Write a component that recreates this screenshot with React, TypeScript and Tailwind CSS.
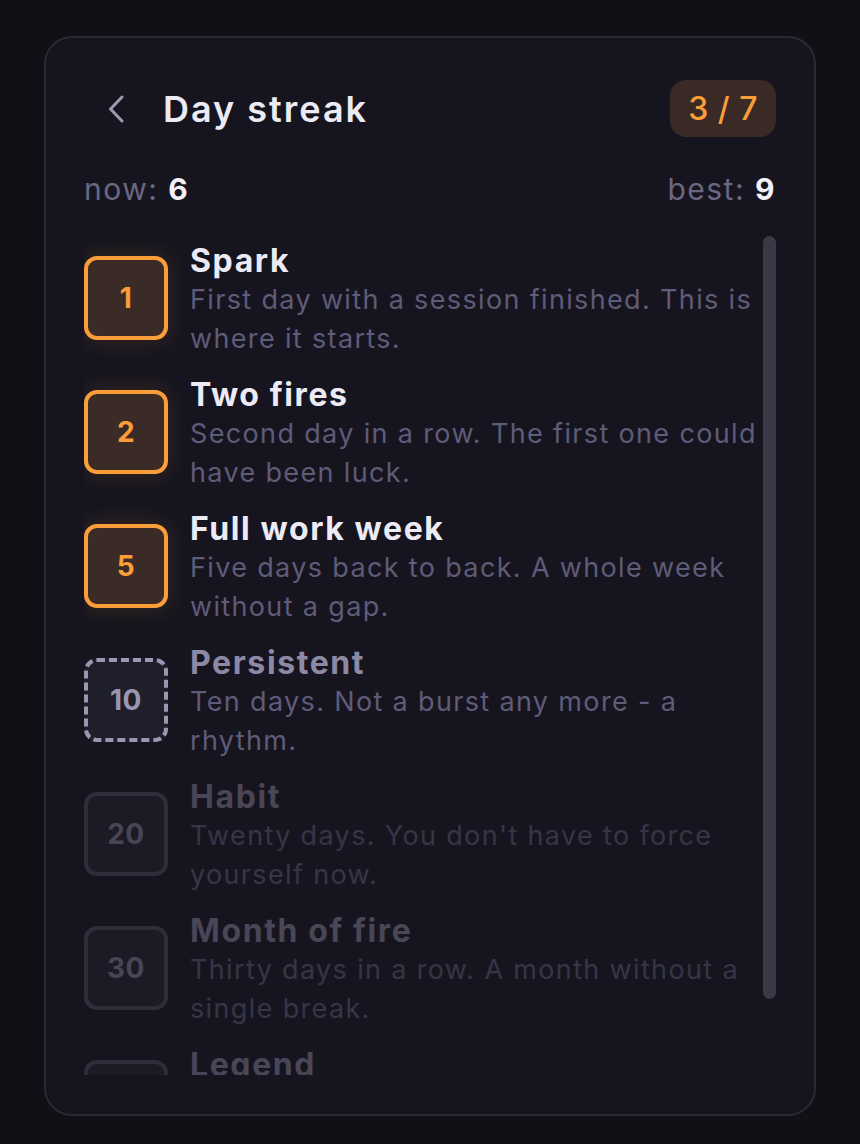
import { ReactNode } from 'react';

type Status = 'done' | 'next' | 'locked';

const milestones: { days: number; title: string; text: string; status: Status }[] = [
  { days: 1, title: 'Spark', text: 'First day with a session finished. This is where it starts.', status: 'done' },
  { days: 2, title: 'Two fires', text: 'Second day in a row. The first one could have been luck.', status: 'done' },
  { days: 5, title: 'Full work week', text: 'Five days back to back. A whole week without a gap.', status: 'done' },
  { days: 10, title: 'Persistent', text: 'Ten days. Not a burst any more - a rhythm.', status: 'next' },
  { days: 20, title: 'Habit', text: "Twenty days. You don't have to force yourself now.", status: 'locked' },
  { days: 30, title: 'Month of fire', text: 'Thirty days in a row. A month without a single break.', status: 'locked' },
  { days: 60, title: 'Legend', text: 'Sixty days. Two months without missing a single day.', status: 'locked' },
];

function DayBadge({ days, status }: { days: number; status: Status }) {
  const styles: Record<Status, string> = {
    done: 'border-[#fb9d38] bg-[#3a2b26] text-[#fb9d38] shadow-[0_0_22px_rgba(251,157,56,0.16)]',
    next: 'border-dashed border-[#9b97b3] bg-[#1f1e2b] text-[#9a96b0]',
    locked: 'border-[#2e2d39] bg-[#1b1a25] text-[#474556]',
  };
  return (
    <div
      className={`mt-[15px] w-[84px] h-[84px] shrink-0 rounded-[13px] border-4 flex items-center justify-center text-[28px] font-bold tracking-[0.5px] ${styles[status]}`}
    >
      {days}
    </div>
  );
}

function Stat({ label, value }: { label: string; value: ReactNode }) {
  return (
    <span className="text-[30px] leading-9 tracking-[1.5px] text-[#6a6781]">
      {label}: <span className="font-bold text-[#f2f1f8]">{value}</span>
    </span>
  );
}

export default function App() {
  const titleColor: Record<Status, string> = {
    done: 'text-[#ecebf5]',
    next: 'text-[#8d89a5]',
    locked: 'text-[#484657]',
  };
  const textColor: Record<Status, string> = {
    done: 'text-[#5f5b78]',
    next: 'text-[#5f5b78]',
    locked: 'text-[#363548]',
  };

  return (
    <div className="min-h-screen bg-[#111016] px-[44px] pt-[36px] pb-[28px] font-['Inter',sans-serif]">
      <div className="h-[1080px] rounded-[28px] border-2 border-[#2b2a34] bg-[#16151f] px-[38px] pt-[42px] pb-[39px] flex flex-col">
        {/* header */}
        <div className="flex items-center justify-between h-[57px]">
          <div className="flex items-center">
            <button className="ml-[23px] w-[18px] flex items-center text-[#9d9ab0]">
              <svg width="18" height="28" viewBox="0 0 18 28" fill="none">
                <path d="M15 2 L3.5 14 L15 26" stroke="currentColor" strokeWidth="3" strokeLinecap="round" strokeLinejoin="round" />
              </svg>
            </button>
            <h1 className="ml-[38px] text-[36px] font-semibold text-[#ecebf3] tracking-[2px]">Day streak</h1>
          </div>
          <div className="h-[57px] px-[18px] rounded-[16px] bg-[#3a2a25] flex items-center text-[32px] font-medium tracking-[0.5px] text-[#fb9d38]">
            3 / 7
          </div>
        </div>

        {/* current / best */}
        <div className="mt-[34px] flex items-center justify-between">
          <Stat label="now" value={6} />
          <Stat label="best" value={9} />
        </div>

        {/* milestones */}
        <div className="mt-[29px] flex-1 min-h-0 flex gap-[4px]">
          <div className="flex-1 overflow-hidden pt-[5px] flex flex-col gap-[17px]">
            {milestones.map((m) => (
              <div key={m.days} className="flex items-start gap-[22px]">
                <DayBadge days={m.days} status={m.status} />
                <div className="min-w-0">
                  <div className={`text-[32px] leading-[40px] font-bold tracking-[1.6px] ${titleColor[m.status]}`}>{m.title}</div>
                  <div className={`text-[27px] leading-[38.5px] tracking-[1.35px] ${textColor[m.status]}`}>{m.text}</div>
                </div>
              </div>
            ))}
          </div>
          <div className="w-[13px] shrink-0">
            <div className="h-[763px] rounded-full bg-[#3a3946]" />
          </div>
        </div>
      </div>
    </div>
  );
}
